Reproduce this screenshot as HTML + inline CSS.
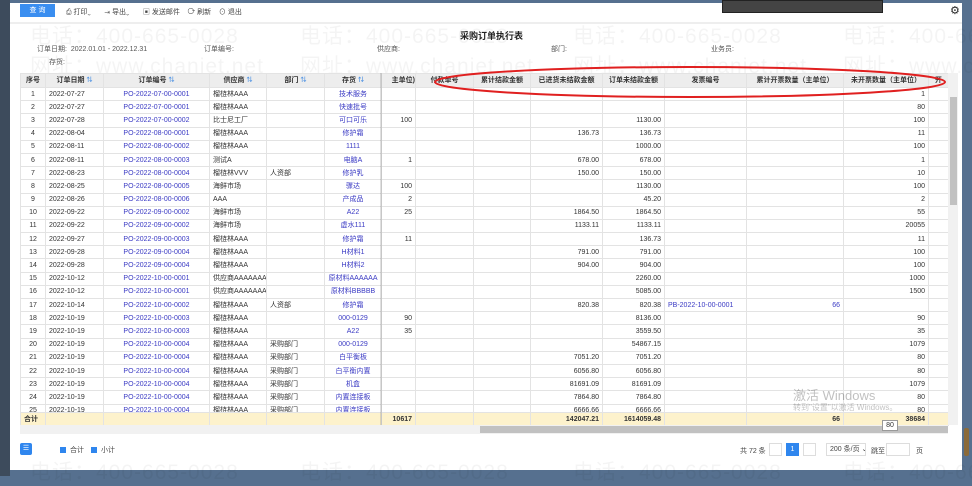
<!DOCTYPE html>
<html><head><meta charset="utf-8"><style>
*{margin:0;padding:0;box-sizing:border-box}
body{width:972px;height:476px;overflow:hidden;background:#56708f;font-family:"Liberation Sans","Noto Sans CJK SC",sans-serif;font-size:7px;color:#333;position:relative}
.a{position:absolute}
#main{left:10px;top:3px;width:952px;height:467px;background:#fff}
.wm{position:absolute;font-size:21px;color:rgba(0,0,0,0.045);white-space:nowrap;letter-spacing:1px}
table{border-collapse:collapse;table-layout:fixed;position:absolute;left:20px}
td{border:1px solid #e3e3e3;height:13.2px;padding:0 3px;white-space:nowrap;overflow:hidden;line-height:11px}
thead td{background:#ededed;font-weight:bold;text-align:center;height:14px;color:#333}
.c{text-align:center}.r{text-align:right}.l{color:#3b3bc4}
.s{color:#4a90e2;font-size:6px}
tr.t td{background:#fdf2cc;font-weight:bold;height:13px}
</style></head><body>
<div class="a" style="left:0;top:0;width:10px;height:476px;background:#3d4b5c"></div>
<div class="a" id="main"></div>
<div class="a" style="left:722px;top:0;width:161px;height:13px;background:#444;border:1px solid #222"></div>
<div class="a" style="left:20px;top:4px;width:35px;height:13px;background:#3a8ef0;color:#fff;text-align:center;line-height:13px;font-size:7px">查 询</div>
<div class="a" style="left:66px;top:7px;color:#444;font-size:7px;white-space:nowrap">⎙ 打印⌄ &nbsp;&nbsp;&nbsp;&nbsp;&nbsp;&nbsp;⇥ 导出⌄ &nbsp;&nbsp;&nbsp;&nbsp;&nbsp;&nbsp;▣ 发送邮件 &nbsp;&nbsp;&nbsp;⟳ 刷新 &nbsp;&nbsp;&nbsp;⊙ 退出</div>
<div class="a" style="left:950px;top:4px;font-size:11px;color:#222">⚙</div>
<div class="a" style="left:10px;top:22px;width:952px;height:2px;background:#eee"></div>
<div class="wm" style="left:30px;top:20px">电话：400-665-0028</div><div class="wm" style="left:300px;top:20px">电话：400-665-0028</div><div class="wm" style="left:573px;top:20px">电话：400-665-0028</div><div class="wm" style="left:843px;top:20px">电话：400-665-0028</div>
<div class="wm" style="left:30px;top:50px">网址：www.chanjet.net</div><div class="wm" style="left:300px;top:50px">网址：www.chanjet.net</div><div class="wm" style="left:573px;top:50px">网址：www.chanjet.net</div><div class="wm" style="left:843px;top:50px">网址：www.chanjet.net</div>
<div class="a" style="left:460px;top:29px;font-size:9px;font-weight:bold;color:#222">采购订单执行表</div>
<div class="a" style="left:37px;top:44px;color:#555;white-space:nowrap">订单日期:&nbsp; 2022.01.01 - 2022.12.31</div>
<div class="a" style="left:204px;top:44px;color:#555">订单编号:</div>
<div class="a" style="left:377px;top:44px;color:#555">供应商:</div>
<div class="a" style="left:551px;top:44px;color:#555">部门:</div>
<div class="a" style="left:711px;top:44px;color:#555">业务员:</div>
<div class="a" style="left:49px;top:57px;color:#555">存货:</div>
<div class="a" style="left:20px;top:73px;width:928px;height:339px;overflow:hidden">
<table style="left:0;top:0;width:928px">
<colgroup><col style="width:25px"><col style="width:58px"><col style="width:106px"><col style="width:57px"><col style="width:58px"><col style="width:57px"><col style="width:34px"><col style="width:58px"><col style="width:57px"><col style="width:72px"><col style="width:62px"><col style="width:82px"><col style="width:97px"><col style="width:85px"><col style="width:20px"></colgroup>
<thead><tr><td>序号</td><td>订单日期 <span class="s">⇅</span></td><td>订单编号 <span class="s">⇅</span></td><td>供应商 <span class="s">⇅</span></td><td>部门 <span class="s">⇅</span></td><td>存货 <span class="s">⇅</span></td><td style="text-align:right;padding:0">主单位)</td><td>付款单号</td><td>累计结款金额</td><td>已进货未结款金额</td><td>订单未结款金额</td><td>发票编号</td><td>累计开票数量（主单位）</td><td>未开票数量（主单位）</td><td>开</td></tr></thead>
<tbody>
<tr><td class="c">1</td><td>2022-07-27</td><td class="c l">PO-2022-07-00-0001</td><td>榴梿林AAA</td><td></td><td class="c l">技术服务</td><td></td><td></td><td></td><td></td><td></td><td></td><td></td><td class="r">1</td><td></td></tr>
<tr><td class="c">2</td><td>2022-07-27</td><td class="c l">PO-2022-07-00-0001</td><td>榴梿林AAA</td><td></td><td class="c l">快速批号</td><td></td><td></td><td></td><td></td><td></td><td></td><td></td><td class="r">80</td><td></td></tr>
<tr><td class="c">3</td><td>2022-07-28</td><td class="c l">PO-2022-07-00-0002</td><td>比士尼工厂</td><td></td><td class="c l">可口可乐</td><td class="r">100</td><td></td><td></td><td></td><td class="r">1130.00</td><td></td><td></td><td class="r">100</td><td></td></tr>
<tr><td class="c">4</td><td>2022-08-04</td><td class="c l">PO-2022-08-00-0001</td><td>榴梿林AAA</td><td></td><td class="c l">修护霜</td><td></td><td></td><td></td><td class="r">136.73</td><td class="r">136.73</td><td></td><td></td><td class="r">11</td><td></td></tr>
<tr><td class="c">5</td><td>2022-08-11</td><td class="c l">PO-2022-08-00-0002</td><td>榴梿林AAA</td><td></td><td class="c l">1111</td><td></td><td></td><td></td><td></td><td class="r">1000.00</td><td></td><td></td><td class="r">100</td><td></td></tr>
<tr><td class="c">6</td><td>2022-08-11</td><td class="c l">PO-2022-08-00-0003</td><td>测试A</td><td></td><td class="c l">电脑A</td><td class="r">1</td><td></td><td></td><td class="r">678.00</td><td class="r">678.00</td><td></td><td></td><td class="r">1</td><td></td></tr>
<tr><td class="c">7</td><td>2022-08-23</td><td class="c l">PO-2022-08-00-0004</td><td>榴梿林VVV</td><td>人资部</td><td class="c l">修护乳</td><td></td><td></td><td></td><td class="r">150.00</td><td class="r">150.00</td><td></td><td></td><td class="r">10</td><td></td></tr>
<tr><td class="c">8</td><td>2022-08-25</td><td class="c l">PO-2022-08-00-0005</td><td>海鲜市场</td><td></td><td class="c l">骤达</td><td class="r">100</td><td></td><td></td><td></td><td class="r">1130.00</td><td></td><td></td><td class="r">100</td><td></td></tr>
<tr><td class="c">9</td><td>2022-08-26</td><td class="c l">PO-2022-08-00-0006</td><td>AAA</td><td></td><td class="c l">产成品</td><td class="r">2</td><td></td><td></td><td></td><td class="r">45.20</td><td></td><td></td><td class="r">2</td><td></td></tr>
<tr><td class="c">10</td><td>2022-09-22</td><td class="c l">PO-2022-09-00-0002</td><td>海鲜市场</td><td></td><td class="c l">A22</td><td class="r">25</td><td></td><td></td><td class="r">1864.50</td><td class="r">1864.50</td><td></td><td></td><td class="r">55</td><td></td></tr>
<tr><td class="c">11</td><td>2022-09-22</td><td class="c l">PO-2022-09-00-0002</td><td>海鲜市场</td><td></td><td class="c l">虚水111</td><td></td><td></td><td></td><td class="r">1133.11</td><td class="r">1133.11</td><td></td><td></td><td class="r">20055</td><td></td></tr>
<tr><td class="c">12</td><td>2022-09-27</td><td class="c l">PO-2022-09-00-0003</td><td>榴梿林AAA</td><td></td><td class="c l">修护霜</td><td class="r">11</td><td></td><td></td><td></td><td class="r">136.73</td><td></td><td></td><td class="r">11</td><td></td></tr>
<tr><td class="c">13</td><td>2022-09-28</td><td class="c l">PO-2022-09-00-0004</td><td>榴梿林AAA</td><td></td><td class="c l">H材料1</td><td></td><td></td><td></td><td class="r">791.00</td><td class="r">791.00</td><td></td><td></td><td class="r">100</td><td></td></tr>
<tr><td class="c">14</td><td>2022-09-28</td><td class="c l">PO-2022-09-00-0004</td><td>榴梿林AAA</td><td></td><td class="c l">H材料2</td><td></td><td></td><td></td><td class="r">904.00</td><td class="r">904.00</td><td></td><td></td><td class="r">100</td><td></td></tr>
<tr><td class="c">15</td><td>2022-10-12</td><td class="c l">PO-2022-10-00-0001</td><td>供应商AAAAAAA</td><td></td><td class="c l">原材料AAAAAA</td><td></td><td></td><td></td><td></td><td class="r">2260.00</td><td></td><td></td><td class="r">1000</td><td></td></tr>
<tr><td class="c">16</td><td>2022-10-12</td><td class="c l">PO-2022-10-00-0001</td><td>供应商AAAAAAA</td><td></td><td class="c l">原材料BBBBB</td><td></td><td></td><td></td><td></td><td class="r">5085.00</td><td></td><td></td><td class="r">1500</td><td></td></tr>
<tr><td class="c">17</td><td>2022-10-14</td><td class="c l">PO-2022-10-00-0002</td><td>榴梿林AAA</td><td>人资部</td><td class="c l">修护霜</td><td></td><td></td><td></td><td class="r">820.38</td><td class="r">820.38</td><td class="l">PB-2022-10-00-0001</td><td class="r l">66</td><td></td><td></td></tr>
<tr><td class="c">18</td><td>2022-10-19</td><td class="c l">PO-2022-10-00-0003</td><td>榴梿林AAA</td><td></td><td class="c l">000-0129</td><td class="r">90</td><td></td><td></td><td></td><td class="r">8136.00</td><td></td><td></td><td class="r">90</td><td></td></tr>
<tr><td class="c">19</td><td>2022-10-19</td><td class="c l">PO-2022-10-00-0003</td><td>榴梿林AAA</td><td></td><td class="c l">A22</td><td class="r">35</td><td></td><td></td><td></td><td class="r">3559.50</td><td></td><td></td><td class="r">35</td><td></td></tr>
<tr><td class="c">20</td><td>2022-10-19</td><td class="c l">PO-2022-10-00-0004</td><td>榴梿林AAA</td><td>采购部门</td><td class="c l">000-0129</td><td></td><td></td><td></td><td></td><td class="r">54867.15</td><td></td><td></td><td class="r">1079</td><td></td></tr>
<tr><td class="c">21</td><td>2022-10-19</td><td class="c l">PO-2022-10-00-0004</td><td>榴梿林AAA</td><td>采购部门</td><td class="c l">白平衡板</td><td></td><td></td><td></td><td class="r">7051.20</td><td class="r">7051.20</td><td></td><td></td><td class="r">80</td><td></td></tr>
<tr><td class="c">22</td><td>2022-10-19</td><td class="c l">PO-2022-10-00-0004</td><td>榴梿林AAA</td><td>采购部门</td><td class="c l">白平衡内置</td><td></td><td></td><td></td><td class="r">6056.80</td><td class="r">6056.80</td><td></td><td></td><td class="r">80</td><td></td></tr>
<tr><td class="c">23</td><td>2022-10-19</td><td class="c l">PO-2022-10-00-0004</td><td>榴梿林AAA</td><td>采购部门</td><td class="c l">机盒</td><td></td><td></td><td></td><td class="r">81691.09</td><td class="r">81691.09</td><td></td><td></td><td class="r">1079</td><td></td></tr>
<tr><td class="c">24</td><td>2022-10-19</td><td class="c l">PO-2022-10-00-0004</td><td>榴梿林AAA</td><td>采购部门</td><td class="c l">内置连接板</td><td></td><td></td><td></td><td class="r">7864.80</td><td class="r">7864.80</td><td></td><td></td><td class="r">80</td><td></td></tr>
<tr><td class="c">25</td><td>2022-10-19</td><td class="c l">PO-2022-10-00-0004</td><td>榴梿林AAA</td><td>采购部门</td><td class="c l">内置连接板</td><td></td><td></td><td></td><td class="r">6666.66</td><td class="r">6666.66</td><td></td><td></td><td class="r">80</td><td></td></tr>
</tbody></table>
</div>
<table style="top:412px;width:928px">
<colgroup><col style="width:25px"><col style="width:58px"><col style="width:106px"><col style="width:57px"><col style="width:58px"><col style="width:57px"><col style="width:34px"><col style="width:58px"><col style="width:57px"><col style="width:72px"><col style="width:62px"><col style="width:82px"><col style="width:97px"><col style="width:85px"><col style="width:20px"></colgroup>
<tr class="t"><td>合计</td><td></td><td></td><td></td><td></td><td></td><td class="r">10617</td><td></td><td></td><td class="r">142047.21</td><td class="r">1614059.48</td><td></td><td class="r">66</td><td class="r">38684</td><td></td></tr></table>
<div class="a" style="left:380px;top:73px;width:2px;height:352px;background:rgba(0,0,0,0.12)"></div>
<div class="a" style="left:948px;top:73px;width:10px;height:352px;background:#f1f1f1"></div>
<div class="a" style="left:950px;top:97px;width:7px;height:108px;background:#c1c1c1"></div>
<div class="a" style="left:20px;top:425px;width:928px;height:9px;background:#f1f1f1"></div>
<div class="a" style="left:480px;top:426px;width:468px;height:7px;background:#c1c1c1"></div>
<div class="a" style="left:882px;top:420px;width:16px;height:11px;background:#fff;border:1px solid #999;font-size:7px;line-height:9px;text-align:center">80</div>
<div class="a" style="left:793px;top:385px;font-size:13px;color:rgba(0,0,0,0.25);white-space:nowrap">激活 Windows</div>
<div class="a" style="left:793px;top:402px;font-size:8px;color:rgba(0,0,0,0.25);white-space:nowrap">转到"设置"以激活 Windows。</div>
<svg class="a" style="left:0;top:0" width="972" height="476"><ellipse cx="690" cy="82" rx="255" ry="15" fill="none" stroke="#e02020" stroke-width="2"/></svg>
<div class="a" style="left:20px;top:443px;width:12px;height:12px;background:#2f86ee;border-radius:2px;color:#fff;font-size:7px;text-align:center;line-height:12px">☰</div>
<div class="a" style="left:60px;top:447px;width:6px;height:6px;background:#2f86ee"></div><div class="a" style="left:70px;top:445px;color:#444">合计</div>
<div class="a" style="left:91px;top:447px;width:6px;height:6px;background:#2f86ee"></div><div class="a" style="left:101px;top:445px;color:#444">小计</div>
<div class="a" style="left:740px;top:446px;color:#444;white-space:nowrap">共 72 条</div>
<div class="a" style="left:769px;top:443px;width:13px;height:13px;border:1px solid #ddd"></div>
<div class="a" style="left:786px;top:443px;width:13px;height:13px;background:#2f86ee;color:#fff;text-align:center;line-height:13px">1</div>
<div class="a" style="left:803px;top:443px;width:13px;height:13px;border:1px solid #ddd"></div>
<div class="a" style="left:826px;top:443px;width:40px;height:13px;border:1px solid #ddd;padding-left:3px;line-height:11px;color:#444;white-space:nowrap;overflow:hidden">200 条/页 ⌄</div>
<div class="a" style="left:871px;top:446px;color:#444">跳至</div>
<div class="a" style="left:886px;top:443px;width:24px;height:13px;border:1px solid #ddd"></div>
<div class="a" style="left:916px;top:446px;color:#444">页</div>
<div class="wm" style="left:30px;top:456px">电话：400-665-0028</div><div class="wm" style="left:300px;top:456px">电话：400-665-0028</div><div class="wm" style="left:573px;top:456px">电话：400-665-0028</div><div class="wm" style="left:843px;top:456px">电话：400-665-0028</div>
<div class="a" style="left:964px;top:428px;width:5px;height:28px;background:#8a6a3a;border-radius:2px"></div>
</body></html>
